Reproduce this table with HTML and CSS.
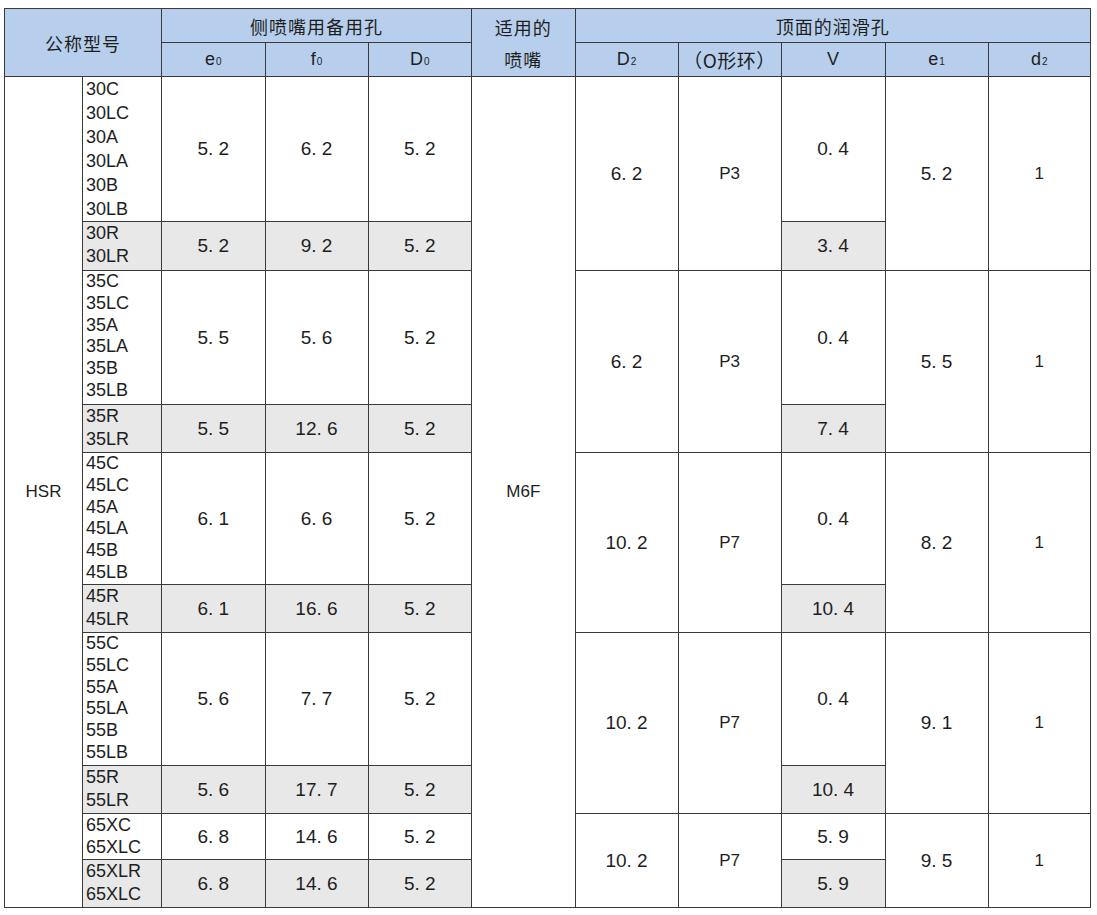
FILE: index.html
```html
<!DOCTYPE html>
<html lang="zh">
<head>
<meta charset="utf-8">
<title>HSR</title>
<link rel="stylesheet" href="styles.css">
</head>
<body>
<table class="spec">
  <colgroup>
    <col class="c1"><col class="c2"><col class="c3"><col class="c4"><col class="c5"><col class="c6">
    <col class="c7"><col class="c8"><col class="c9"><col class="c10"><col class="c11">
  </colgroup>
  <thead>
    <tr class="h1">
      <th colspan="2" rowspan="2" class="zh">公称型号</th>
      <th colspan="3" class="zh">侧喷嘴用备用孔</th>
      <th rowspan="2" class="zh two">适用的<br>喷嘴</th>
      <th colspan="5" class="zh">顶面的润滑孔</th>
    </tr>
    <tr class="h2">
      <th>e<sub>0</sub></th>
      <th>f<sub>0</sub></th>
      <th>D<sub>0</sub></th>
      <th>D<sub>2</sub></th>
      <th class="zh small">（O形环）</th>
      <th>V</th>
      <th>e<sub>1</sub></th>
      <th>d<sub>2</sub></th>
    </tr>
  </thead>
  <tbody>
    <tr class="six first">
      <td rowspan="10" class="label">HSR</td>
      <td class="model">30C<br>30LC<br>30A<br>30LA<br>30B<br>30LB</td>
      <td>5. 2</td><td>6. 2</td><td>5. 2</td>
      <td rowspan="10" class="label">M6F</td>
      <td rowspan="2">6. 2</td><td rowspan="2" class="lat">P3</td><td>0. 4</td><td rowspan="2">5. 2</td><td rowspan="2" class="lat">1</td>
    </tr>
    <tr class="two-r grey tall">
      <td class="model">30R<br>30LR</td>
      <td>5. 2</td><td>9. 2</td><td>5. 2</td>
      <td>3. 4</td>
    </tr>
    <tr class="six g2">
      <td class="model">35C<br>35LC<br>35A<br>35LA<br>35B<br>35LB</td>
      <td>5. 5</td><td>5. 6</td><td>5. 2</td>
      <td rowspan="2">6. 2</td><td rowspan="2" class="lat">P3</td><td>0. 4</td><td rowspan="2">5. 5</td><td rowspan="2" class="lat">1</td>
    </tr>
    <tr class="two-r grey">
      <td class="model">35R<br>35LR</td>
      <td>5. 5</td><td>12. 6</td><td>5. 2</td>
      <td>7. 4</td>
    </tr>
    <tr class="six g3">
      <td class="model">45C<br>45LC<br>45A<br>45LA<br>45B<br>45LB</td>
      <td>6. 1</td><td>6. 6</td><td>5. 2</td>
      <td rowspan="2">10. 2</td><td rowspan="2" class="lat">P7</td><td>0. 4</td><td rowspan="2">8. 2</td><td rowspan="2" class="lat">1</td>
    </tr>
    <tr class="two-r grey">
      <td class="model">45R<br>45LR</td>
      <td>6. 1</td><td>16. 6</td><td>5. 2</td>
      <td>10. 4</td>
    </tr>
    <tr class="six g4">
      <td class="model">55C<br>55LC<br>55A<br>55LA<br>55B<br>55LB</td>
      <td>5. 6</td><td>7. 7</td><td>5. 2</td>
      <td rowspan="2">10. 2</td><td rowspan="2" class="lat">P7</td><td>0. 4</td><td rowspan="2">9. 1</td><td rowspan="2" class="lat">1</td>
    </tr>
    <tr class="two-r grey">
      <td class="model">55R<br>55LR</td>
      <td>5. 6</td><td>17. 7</td><td>5. 2</td>
      <td>10. 4</td>
    </tr>
    <tr class="two-r short">
      <td class="model">65XC<br>65XLC</td>
      <td>6. 8</td><td>14. 6</td><td>5. 2</td>
      <td rowspan="2">10. 2</td><td rowspan="2" class="lat">P7</td><td>5. 9</td><td rowspan="2">9. 5</td><td rowspan="2" class="lat">1</td>
    </tr>
    <tr class="two-r grey">
      <td class="model">65XLR<br>65XLC</td>
      <td>6. 8</td><td>14. 6</td><td>5. 2</td>
      <td>5. 9</td>
    </tr>
  </tbody>
</table>
</body>
</html>
```
FILE: styles.css
```css
html, body {
  margin: 0;
  padding: 0;
  background: #ffffff;
}
body {
  padding: 8px 0 0 4px;
  font-family: "Liberation Sans", Arial, sans-serif;
  color: #1e1e1e;
}
.spec {
  border-collapse: collapse;
  table-layout: fixed;
  width: 1087px;
}
.c1 { width: 78px; }
.c2 { width: 79px; }
.c3 { width: 103.5px; }
.c4 { width: 103px; }
.c5 { width: 103.5px; }
.c6 { width: 103.5px; }
.c7 { width: 103px; }
.c8 { width: 103px; }
.c9 { width: 104px; }
.c10 { width: 103px; }
.c11 { width: 102.5px; }

.spec th, .spec td {
  border: 1px solid #3a3a3a;
  padding: 0;
  text-align: center;
  vertical-align: middle;
}
.spec th {
  background: #b7cfec;
  font-weight: normal;
  font-size: 18px;
  color: #1e1e1e;
}
.h1 th, .h2 th { height: 33px; }
.zh {
  font-family: "Noto Sans CJK SC", "Liberation Sans", sans-serif;
  font-size: 22px;
  letter-spacing: 1px;
}
.zh.two { line-height: 32px; }
.zh.small { font-size: 19px; letter-spacing: 0.5px; }
.spec th sub {
  font-size: 10px;
  vertical-align: baseline;
  margin-left: 1px;
}
.spec td {
  font-size: 19px;
  color: #1e1e1e;
}
.spec td.lat, .spec td.label { font-size: 17px; }
.spec td.model {
  text-align: left;
  padding-left: 3px;
  font-size: 18px;
  line-height: 21.8px;
  vertical-align: top;
}
.six td { height: 132px; }
.six.first td { height: 144px; }
.six.g2 td { height: 133px; }
.six.g3 td { height: 131px; }
.six.g4 td { height: 132px; }
.first td.model { line-height: 24px; }
.two-r td { height: 47px; }
.two-r.tall td { height: 48px; }
.two-r.short td { height: 45px; }
.two-r td.model { line-height: 23px; }
.short td.model { line-height: 22px; }
.spec td[rowspan] { height: auto; }
.grey td { background: #e8e8e8; }
.grey td[rowspan] { background: #ffffff; }
```
